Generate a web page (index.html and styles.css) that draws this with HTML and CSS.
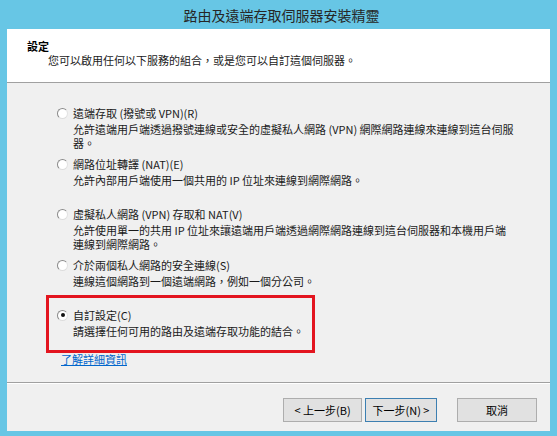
FILE: index.html
```html
<!DOCTYPE html>
<html lang="zh-Hant">
<head>
<meta charset="utf-8">
<title>路由及遠端存取伺服器安裝精靈</title>
<link rel="stylesheet" href="styles.css">
</head>
<body>
<div class="window">
  <div class="titlebar">路由及遠端存取伺服器安裝精靈</div>
  <div class="client">
    <div class="header">
      <div class="h-title">設定</div>
      <div class="h-sub">您可以啟用任何以下服務的組合，或是您可以自訂這個伺服器。</div>
    </div>
    <div class="content">
      <div class="options">
        <div class="opt first">
          <div class="opt-label"><span class="radio"></span><span>遠端存取 (撥號或 VPN)(R)</span></div>
          <div class="opt-desc">允許遠端用戶端透過撥號連線或安全的虛擬私人網路 (VPN) 網際網路連線來連線到這台伺服<br>器。</div>
        </div>
        <div class="opt">
          <div class="opt-label"><span class="radio"></span><span>網路位址轉譯 (NAT)(E)</span></div>
          <div class="opt-desc">允許內部用戶端使用一個共用的 IP 位址來連線到網際網路。</div>
        </div>
        <div class="opt">
          <div class="opt-label"><span class="radio"></span><span>虛擬私人網路 (VPN) 存取和 NAT(V)</span></div>
          <div class="opt-desc">允許使用單一的共用 IP 位址來讓遠端用戶端透過網際網路連線到這台伺服器和本機用戶端<br>連線到網際網路。</div>
        </div>
        <div class="opt">
          <div class="opt-label"><span class="radio"></span><span>介於兩個私人網路的安全連線(S)</span></div>
          <div class="opt-desc">連線這個網路到一個遠端網路，例如一個分公司。</div>
        </div>
        <div class="opt marked">
          <div class="opt-label"><span class="radio checked"></span><span>自訂設定(C)</span></div>
          <div class="opt-desc">請選擇任何可用的路由及遠端存取功能的結合。</div>
        </div>
      </div>
      <a class="more" href="#">了解詳細資訊</a>
    </div>
    <div class="footer">
      <button class="btn btn-back">&lt; 上一步(B)</button>
      <button class="btn btn-next">下一步(N) &gt;</button>
      <button class="btn btn-cancel">取消</button>
    </div>
  </div>
</div>
</body>
</html>
```
FILE: styles.css
```css
* { box-sizing: border-box; }
html, body { margin: 0; padding: 0; }
body {
  width: 557px;
  height: 436px;
  overflow: hidden;
  font-family: "Noto Sans CJK TC", "Noto Sans", sans-serif;
  font-size: 11px;
  color: #1a1a1a;
  background: #67c6e5;
}
.window {
  width: 557px;
  height: 436px;
  background: #67c6e5;
  padding: 0 7px 5px 7px;
  display: flex;
  flex-direction: column;
}
.titlebar {
  height: 29px;
  display: flex;
  align-items: center;
  justify-content: center;
  font-size: 14px;
  color: #262626;
  padding-left: 6px;
}
.client {
  flex: 1;
  display: flex;
  flex-direction: column;
  background: #f0f0f0;
}
.header {
  height: 54px;
  background: #ffffff;
  border-bottom: 1px solid #a0a0a0;
  padding: 10px 0 0 20px;
  line-height: 14px;
}
.h-title { font-weight: bold; color: #000; }
.h-sub { padding-left: 21px; margin-top: 0; color: #1a1a1a; }
.content {
  flex: 1;
  padding: 22px 0 0 50px;
  border-bottom: 1px solid #a0a0a0;
  display: flex;
  flex-direction: column;
}
.options {
  display: flex;
  flex-direction: column;
  gap: 6px;
}
.opt {
  min-height: 44px;
  position: relative;
}
.opt.first { min-height: 42px; }
.opt-label {
  display: flex;
  align-items: center;
  gap: 5px;
  height: 16px;
  line-height: 16px;
}
.radio {
  width: 11px;
  height: 11px;
  border-radius: 50%;
  border: 1px solid #8a8a8a;
  border-right-color: #e2e2e2;
  border-bottom-color: #dcdcdc;
  background: #ffffff;
  display: inline-flex;
  align-items: center;
  justify-content: center;
  flex: none;
}
.radio.checked::before {
  content: "";
  width: 4px;
  height: 4px;
  border-radius: 50%;
  background: #111;
}
.opt-desc {
  padding-left: 16px;
  line-height: 14px;
}
.opt-label + .opt-desc { margin-top: 1px; }
.marked::after {
  content: "";
  position: absolute;
  left: -11px;
  top: -12px;
  width: 263px;
  height: 52px;
  border: 3px solid #e3151f;
  pointer-events: none;
}
.more {
  margin: 1px 0 0 4px;
  color: #0066cc;
  text-decoration: underline;
  line-height: 14px;
  align-self: flex-start;
}
.footer {
  height: 48px;
  border-top: 1px solid #ffffff;
  display: flex;
  align-items: flex-start;
  justify-content: flex-end;
  padding: 14px 13px 0 0;
}
.btn {
  height: 24px;
  font-family: inherit;
  font-size: 11px;
  color: #000;
  background: #e1e1e1;
  border: 1px solid #adadad;
  padding: 0;
  line-height: 20px;
}
.btn-back { width: 79px; }
.btn-next { width: 72px; margin-left: 3px; border-color: #3c7fb1; }
.btn-cancel { width: 80px; margin-left: 20px; }
```
